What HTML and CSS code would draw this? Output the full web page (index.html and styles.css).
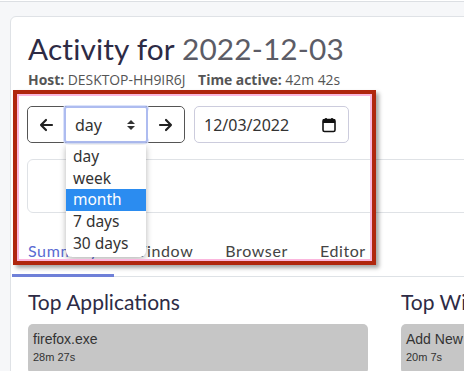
FILE: index.html
```html
<!DOCTYPE html>
<html>
<head>
<meta charset="utf-8">
<link rel="stylesheet" href="styles.css">
</head>
<body>
<div class="topbar"></div>
<div class="card">
  <h1 class="title">Activity for <span class="date">2022-12-03</span></h1>
  <div class="meta"><b>Host:</b> DESKTOP-HH9IR6J <b class="gap">Time active:</b> 42m 42s</div>
  <div class="controls">
    <div class="btngroup">
      <button class="btn arrow"><svg width="16" height="16" viewBox="0 0 16 16"><path d="M14 8H3M8 3L3 8l5 5" fill="none" stroke="#222" stroke-width="2.2" stroke-linecap="round" stroke-linejoin="round"/></svg></button>
      <div class="select">day <svg width="10" height="14" viewBox="0 0 10 14"><path d="M1 6L5 2l4 4zM1 8l4 4 4-4z" fill="#333"/></svg></div>
      <button class="btn arrow"><svg width="16" height="16" viewBox="0 0 16 16"><path d="M2 8h11M8 3l5 5-5 5" fill="none" stroke="#222" stroke-width="2.2" stroke-linecap="round" stroke-linejoin="round"/></svg></button>
    </div>
    <div class="dateinput">12/03/2022 <svg width="14" height="16" viewBox="0 0 14 16"><rect x="1" y="2.5" width="12" height="12" rx="1.5" fill="none" stroke="#111" stroke-width="1.6"/><rect x="1" y="2.5" width="12" height="3.5" fill="#111"/><path d="M4 1v3M10 1v3" stroke="#111" stroke-width="1.6"/></svg></div>
  </div>
  <div class="optbox"></div>
  <nav class="tabs">
    <span class="tab active">Summary</span>
    <span class="tab">Window</span>
    <span class="tab">Browser</span>
    <span class="tab">Editor</span>
  </nav>
  <div class="cols">
    <section class="col">
      <h2 class="h2">Top Applications</h2>
      <div class="bar"><div class="bname">firefox.exe</div><div class="btime">28m 27s</div></div>
    </section>
    <section class="col">
      <h2 class="h2">Top Window Titles</h2>
      <div class="bar"><div class="bname">Add New Post</div><div class="btime">20m 7s</div></div>
    </section>
  </div>
  <ul class="dropdown">
    <li>day</li>
    <li>week</li>
    <li class="hl">month</li>
    <li>7 days</li>
    <li>30 days</li>
  </ul>
</div>
<div class="annot"></div>
</body>
</html>
```
FILE: styles.css
```css
* { box-sizing: border-box; }
html, body { margin: 0; padding: 0; }
body {
  background: #f6f7f9;
  font-family: "Open Sans", "Noto Sans", sans-serif;
  color: #333;
  width: 464px;
  height: 371px;
  overflow: hidden;
  position: relative;
}
.topbar {
  height: 2px;
  border-bottom: 1px solid #dcdfe3;
  background: #fff;
}
.card {
  position: relative;
  margin: 14px 0 0 10px;
  width: 480px;
  height: 400px;
  background: #fff;
  border: 1px solid #dfe2e6;
  border-radius: 6px;
  padding: 14px 0 0 0;
  overflow: hidden;
}
.title {
  margin: 0 0 0 17px;
  font-family: "Lato", "Open Sans", sans-serif;
  font-weight: 400;
  font-size: 29.8px;
  line-height: 36px;
  letter-spacing: 0.15px;
  color: #2d2b45;
  white-space: nowrap;
}
.title .date { color: #5c5c66; }
.meta {
  margin: 4px 0 0 17px;
  font-size: 13.9px;
  line-height: 17px;
  color: #555;
  white-space: nowrap;
}
.meta b { font-weight: 700; color: #555; }
.meta .gap { margin-left: 9px; }
.controls {
  margin: 18px 0 0 16px;
  display: flex;
  gap: 9px;
  align-items: center;
}
.btngroup {
  display: flex;
  height: 37px;
  border: 1px solid #555;
  border-radius: 5px;
}
.btn {
  width: 36px;
  height: 35px;
  border: 0;
  background: #fff;
  border-radius: 5px;
  padding: 0;
  display: flex;
  align-items: center;
  justify-content: center;
}
.select {
  width: 84px;
  height: 37px;
  margin-top: -1px;
  border: 2px solid #aebcf0;
  box-shadow: 0 0 0 1px #dbe3fb;
  border-radius: 3px;
  display: flex;
  align-items: center;
  justify-content: space-between;
  padding: 0 10px 0 9px;
  font-family: "Noto Sans", sans-serif;
  font-size: 16px;
  color: #333;
}
.dateinput {
  width: 155px;
  height: 37px;
  border: 1px solid #ccd;
  border-radius: 5px;
  display: flex;
  align-items: center;
  justify-content: space-between;
  padding: 0 12px 0 9px;
  font-family: "Noto Sans", sans-serif;
  font-size: 16px;
  color: #333;
}
.optbox {
  margin: 16px 0 0 16px;
  height: 54px;
  border: 1px solid #dfe2e6;
  border-radius: 6px;
}
.tabs {
  margin: 23px 0 0 1px;
  display: flex;
  border-bottom: 1px solid #dee2e6;
  font-family: "Lato", "Open Sans", sans-serif;
  font-size: 16px;
}
.tab {
  padding: 5px 16px 14px;
  color: #444;
  letter-spacing: 0.6px;
  border-bottom: 3px solid transparent;
  margin-bottom: -1px;
}
.tab.active {
  color: #5a6bd2;
  border-bottom-color: #6f80d8;
}
.cols {
  display: flex;
  gap: 33px;
  margin: 12px 0 0 17px;
}
.col { width: 340px; flex: none; }
.h2 {
  margin: 0 0 9px;
  font-family: "Lato", "Open Sans", sans-serif;
  font-weight: 400;
  font-size: 21px;
  line-height: 26px;
  color: #2d2b45;
  white-space: nowrap;
}
.bar {
  background: #c6c6c6;
  border-radius: 5px;
  height: 50px;
  padding: 7px 5px;
  font-family: "Liberation Sans", Arial, sans-serif;
  color: #333;
  white-space: nowrap;
}
.bname { font-size: 14px; line-height: 17px; }
.btime { font-size: 11px; line-height: 16px; margin-top: 1px; }
.dropdown {
  position: absolute;
  left: 55px;
  top: 128px;
  width: 80px;
  margin: 0;
  padding: 1px 0 3px;
  list-style: none;
  background: #fff;
  border-radius: 0 0 6px 6px;
  box-shadow: 0 2px 6px rgba(0,0,0,0.3);
  font-family: "Noto Sans", sans-serif;
  font-size: 15.5px;
  color: #333;
}
.dropdown li {
  height: 21.7px;
  line-height: 21.7px;
  padding-left: 7px;
}
.dropdown li.hl {
  background: #2b8cf0;
  color: #fff;
}
.annot {
  position: absolute;
  left: 13px;
  top: 90px;
  width: 363px;
  height: 175px;
  border: 4px solid #b0260e;
  box-shadow: inset 0 0 0 2px #fbb6dd, 3px 3px 4px rgba(0,0,0,0.35);
  pointer-events: none;
}
```
